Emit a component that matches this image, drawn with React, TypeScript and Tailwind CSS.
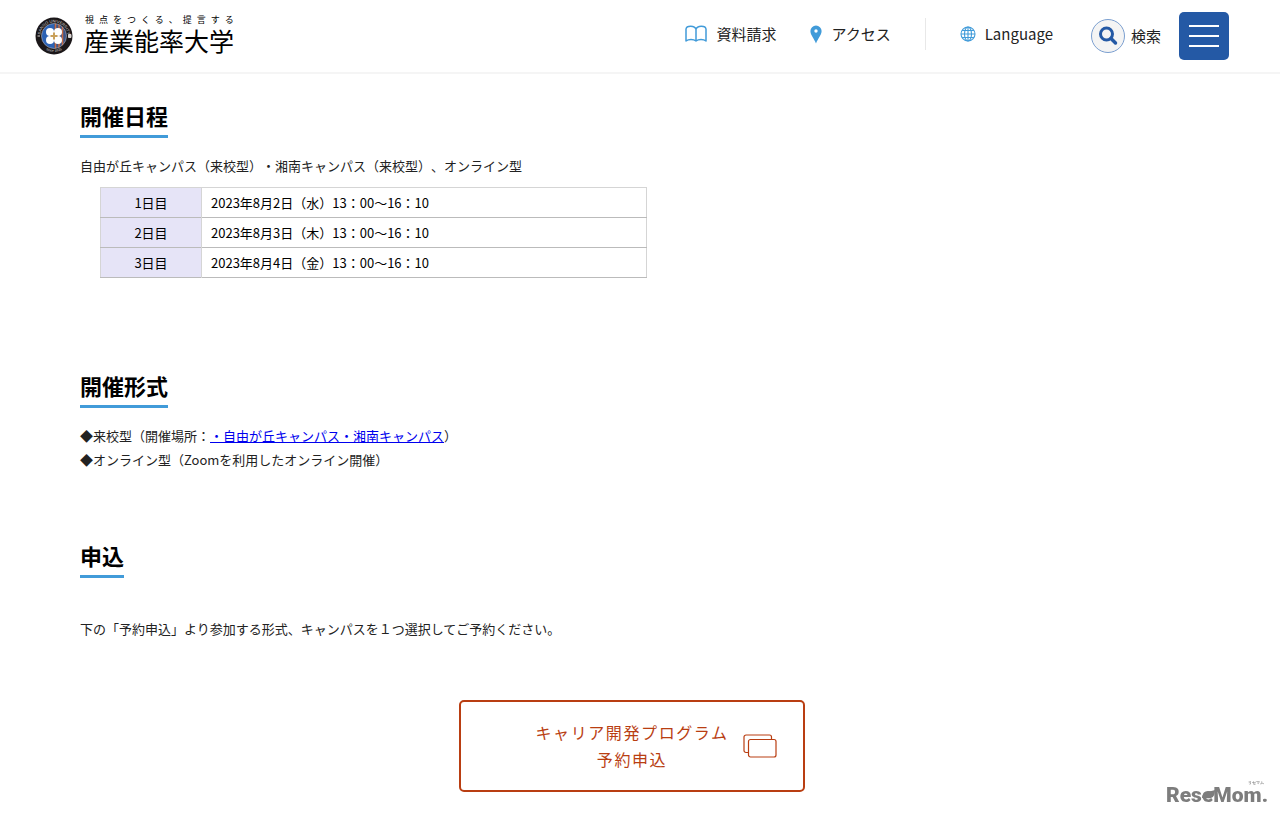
import type { ReactNode } from 'react';

type ScheduleRow = {
  day: string;
  date: string;
};

const schedule: ScheduleRow[] = [
  { day: '1日目', date: '2023年8月2日（水）13：00〜16：10' },
  { day: '2日目', date: '2023年8月3日（木）13：00〜16：10' },
  { day: '3日目', date: '2023年8月4日（金）13：00〜16：10' },
];

// University emblem
function Emblem() {
  return (
    <svg viewBox="0 0 76 76" className="size-[38px] shrink-0" aria-hidden="true">
      <defs>
        <path id="ring-top" d="M11 38a27 27 0 0 1 54 0" />
        <path id="ring-bottom" d="M6 38a32 32 0 0 0 64 0" />
        <clipPath id="emblem-core">
          <circle cx="38" cy="38" r="25" />
        </clipPath>
      </defs>
      <circle cx="38" cy="38" r="37" fill="#1b1719" />
      <g clipPath="url(#emblem-core)">
        <rect x="12" y="12" width="26" height="52" fill="#2c62b4" />
        <rect x="38" y="12" width="26" height="52" fill="#3b5588" />
        <path d="M41 12v52M48 12v52M55 12v52" stroke="#c46a45" strokeWidth="3" />
      </g>
      <circle cx="38" cy="38" r="25" fill="none" stroke="#cfc9c6" strokeWidth="1" />
      <g fill="#fff">
        <circle cx="30" cy="30" r="8" />
        <circle cx="46" cy="30" r="8" />
        <circle cx="30" cy="46" r="8" />
        <circle cx="46" cy="46" r="8" />
      </g>
      <path d="M38 31v14M31 38h14" stroke="#c9a05a" strokeWidth="4" />
      <g fill="#d8d4d2" fontFamily="Liberation Sans, sans-serif" fontSize="8" textAnchor="middle">
        <text>
          <textPath href="#ring-top" startOffset="50%">SANNO UNIVERSITY</textPath>
        </text>
        <text fontSize="7">
          <textPath href="#ring-bottom" startOffset="50%">since 1925</textPath>
        </text>
      </g>
      <path d="M5 38h5M67 35h5v6h-5z" stroke="#d8d4d2" strokeWidth="2" fill="#d8d4d2" />
    </svg>
  );
}

function BookIcon() {
  return (
    <svg
      viewBox="0 0 22 18"
      className="h-[18px] w-[22px]"
      fill="none"
      stroke="#419bd9"
      strokeWidth="1.500"
      strokeLinejoin="round"
      aria-hidden="true"
    >
      <path d="M11 4.200C9.800.200 1.500.200 1 4v12c2.500-2 7.500-2 10 0 2.500-2 7.500-2 10 0V4C20.500.200 12.200.200 11 4.200zM11 4.200V16" />
    </svg>
  );
}

function PinIcon() {
  return (
    <svg viewBox="0 0 12 19" className="h-[19px] w-3" aria-hidden="true">
      <path
        fill="#419bd9"
        fillRule="evenodd"
        d="M6 .5A5.600 5.600 0 0 0 .4 6.100C.4 10 4 13.500 6 18.500 8 13.500 11.600 10 11.600 6.100A5.600 5.600 0 0 0 6 .5zm0 3.800a1.700 1.700 0 1 1 0 3.400 1.700 1.700 0 0 1 0-3.400z"
      />
    </svg>
  );
}

function GlobeIcon() {
  return (
    <svg
      viewBox="0 0 16 16"
      className="size-4"
      fill="none"
      stroke="#419bd9"
      strokeWidth="1.100"
      aria-hidden="true"
    >
      <circle cx="8" cy="8" r="7" />
      <ellipse cx="8" cy="8" rx="3.500" ry="7" />
      <path d="M8 1v14M1 8h14M2 4.500h12M2 11.500h12" />
    </svg>
  );
}

function SearchIcon() {
  return (
    <svg
      viewBox="0 0 20 20"
      className="size-5"
      fill="none"
      stroke="#2459a5"
      strokeLinecap="round"
      aria-hidden="true"
    >
      <circle cx="8.500" cy="8" r="6" strokeWidth="3" />
      <path d="M13 12.500l4.500 4.500" strokeWidth="3.500" />
    </svg>
  );
}

function WindowsIcon() {
  return (
    <svg
      viewBox="0 0 34 24"
      className="h-6 w-[34px]"
      fill="none"
      stroke="#b93e12"
      strokeWidth="1.200"
      aria-hidden="true"
    >
      <rect x="5.500" y="5.500" width="27.500" height="17.500" rx="2" />
      <path d="M5.500 18.500H3a2 2 0 0 1-2-2V3a2 2 0 0 1 2-2h23.500a2 2 0 0 1 2 2v2.500" />
    </svg>
  );
}

function Header() {
  return (
    <header className="flex items-center justify-between border-b-2 border-[#f5f5f5] pl-[35px] pr-[51px]">
      <a href="#" className="flex items-center gap-[11px] text-black">
        <Emblem />
        <span className="flex flex-col font-['Liberation_Sans','Noto_Sans_CJK_JP',sans-serif]">
          <span className="pl-px text-[9px] leading-3 tracking-[5px]">視点をつくる、提言する</span>
          <span className="text-[25px] leading-8">産業能率大学</span>
        </span>
      </a>

      <div className="flex items-center">
        <nav className="flex items-center gap-[34px] pb-1 text-[15px] leading-6">
          <a href="#" className="flex items-center gap-[9px]">
            <BookIcon />
            資料請求
          </a>
          <a href="#" className="flex items-center gap-[9px]">
            <PinIcon />
            アクセス
          </a>
          <span className="h-8 w-px bg-[#e8e8e8]" />
          <a href="#" className="flex items-center gap-[9px]">
            <GlobeIcon />
            Language
          </a>
        </nav>
        <button type="button" className="ml-[38px] flex items-center gap-[6px] text-[15px]">
          <span className="flex size-[34px] items-center justify-center rounded-full border border-[#7b9fd0] bg-[#f4f4f4]">
            <SearchIcon />
          </span>
          検索
        </button>
        <button
          type="button"
          aria-label="メニュー"
          className="my-3 ml-[18px] flex h-12 w-[50px] flex-col items-center justify-center gap-[8px] rounded-[5px] bg-[#2459a5]"
        >
          <span className="h-[2px] w-[30px] bg-white" />
          <span className="h-[2px] w-[30px] bg-white" />
          <span className="h-[2px] w-[30px] bg-white" />
        </button>
      </div>
    </header>
  );
}

function SectionTitle({ children }: { children: ReactNode }) {
  return (
    <h2 className="w-fit border-b-3 border-[#419bd9] pb-1 text-[22px] leading-8 font-bold text-black">
      {children}
    </h2>
  );
}

function ResemomMark() {
  return (
    <div className="fixed right-3 bottom-2 font-['Roboto',sans-serif] text-[#7d7d7d]">
      <span className="absolute -top-px right-1 text-[4px] leading-[6px] font-bold">リセマム</span>
      <span className="flex items-baseline text-[21px] leading-7 font-black">
        Res
        <span className="relative">
          e
          <svg viewBox="0 0 13 11" className="absolute top-[9px] left-0 h-[11px] w-[13px]" aria-hidden="true">
            <path d="M0 8C0 2 6 2 13 0c0 7-3 9-9 8z" fill="#7d7d7d" />
          </svg>
        </span>
        Mom.
      </span>
    </div>
  );
}

export default function App() {
  return (
    <div className="min-h-screen bg-white font-['Noto_Sans_CJK_JP',sans-serif] text-[#222] [text-spacing-trim:space-all]">
      <Header />

      <main className="pr-24 pb-6 pl-20 text-[13px] leading-6">
        <section className="pt-[25px]">
          <SectionTitle>開催日程</SectionTitle>
          <p className="mt-4">自由が丘キャンパス（来校型）・湘南キャンパス（来校型）、オンライン型</p>
          <table className="mt-[9px] ml-5 w-[547px] border-collapse border border-[#d5d5d5] text-black">
            <tbody>
              {schedule.map((row) => (
                <tr key={row.day} className="h-[30px] border-b border-[#bbb]">
                  <th scope="row" className="w-[101px] border-r border-[#d5d5d5] bg-[#e6e4f7] font-normal">
                    {row.day}
                  </th>
                  <td className="px-[9px]">{row.date}</td>
                </tr>
              ))}
            </tbody>
          </table>
        </section>

        <section className="mt-[91px]">
          <SectionTitle>開催形式</SectionTitle>
          <p className="mt-4">
            ◆来校型（開催場所：
            <a href="#" className="text-[#00e] underline">
              ・自由が丘キャンパス・湘南キャンパス
            </a>
            ）
            <br />
            ◆オンライン型（Zoomを利用したオンライン開催）
          </p>
        </section>

        <section className="mt-[67px]">
          <SectionTitle>申込</SectionTitle>
          <p className="mt-[39px]">下の「予約申込」より参加する形式、キャンパスを１つ選択してご予約ください。</p>
          <a
            href="#"
            className="mx-auto mt-[59px] grid w-[346px] grid-cols-[1fr_auto_1fr] items-center rounded-[5px] border-2 border-[#b93e12] py-[17px] text-center text-base leading-[27px] tracking-widest text-[#b93e12]"
          >
            <span className="col-start-2">
              キャリア開発プログラム
              <br />
              予約申込
            </span>
            <span className="pl-[14px]">
              <WindowsIcon />
            </span>
          </a>
        </section>
      </main>

      <ResemomMark />
    </div>
  );
}
